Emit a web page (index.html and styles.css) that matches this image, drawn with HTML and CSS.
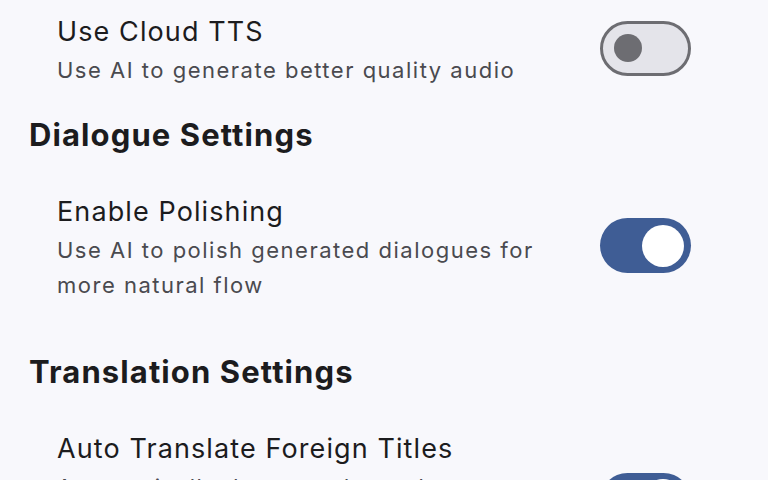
FILE: index.html
```html
<!DOCTYPE html>
<html lang="en">
<head>
    <meta charset="UTF-8">
    <title>Settings</title>
    <link rel="stylesheet" href="styles.css">
</head>
<body>
    <div class="settings">
        <div class="section-partial">
            <div class="row">
                <div class="row-text">
                    <div class="row-title">Use Cloud TTS</div>
                    <div class="row-sub">Use AI to generate better quality audio</div>
                </div>
                <div class="toggle">
                    <div class="knob"></div>
                </div>
            </div>
        </div>

        <div class="section">
            <div class="section-title">Dialogue Settings</div>
            <div class="row">
                <div class="row-text">
                    <div class="row-title">Enable Polishing</div>
                    <div class="row-sub">Use AI to polish generated dialogues for more natural flow</div>
                </div>
                <div class="toggle on">
                    <div class="knob"></div>
                </div>
            </div>
        </div>

        <div class="section">
            <div class="section-title">Translation Settings</div>
            <div class="row">
                <div class="row-text">
                    <div class="row-title">Auto Translate Foreign Titles</div>
                    <div class="row-sub">Automatically detect and translate non-English titles into your preferred display language</div>
                </div>
                <div class="toggle on">
                    <div class="knob"></div>
                </div>
            </div>
        </div>
    </div>
</body>
</html>
```

FILE: styles.css
```css
body, html {
    margin: 0;
    height: 100%;
    overflow: hidden;
    background-color: #f8f8fc;
    font-family: Inter, "Noto Sans", sans-serif;
    color: #1c1c1e;
}
.settings {
    padding: 13px 0 0 29px;
}
.section-partial {
    padding-bottom: 8px;
}
.section {
    padding-bottom: 30px;
}
.section-title {
    font-size: 31px;
    font-weight: 700;
    line-height: 40px;
    letter-spacing: 1.1px;
    margin-bottom: 19px;
}
.row {
    display: flex;
    align-items: center;
    padding: 0 77px 19px 28px;
}
.section .row {
    padding-top: 19px;
}
.row-text {
    flex: 1;
    margin-right: 40px;
}
.row-title {
    font-size: 27px;
    line-height: 38px;
    letter-spacing: 1.1px;
    margin-bottom: 2px;
}
.row-sub {
    font-size: 22px;
    line-height: 35px;
    letter-spacing: 1.5px;
    color: #4a4a4f;
}
.toggle {
    box-sizing: border-box;
    width: 91px;
    height: 55px;
    border-radius: 28px;
    border: 3px solid #6d6d72;
    background-color: #e4e4ea;
    display: flex;
    align-items: center;
    padding: 0 11px;
    flex-shrink: 0;
    margin-top: -5px;
}
.toggle .knob {
    width: 28px;
    height: 28px;
    border-radius: 50%;
    background-color: #6d6d72;
}
.toggle.on {
    border: none;
    background-color: #3f5d95;
    justify-content: flex-end;
    padding: 0 7px;
}
.toggle.on .knob {
    width: 42px;
    height: 42px;
    background-color: #ffffff;
}
```
